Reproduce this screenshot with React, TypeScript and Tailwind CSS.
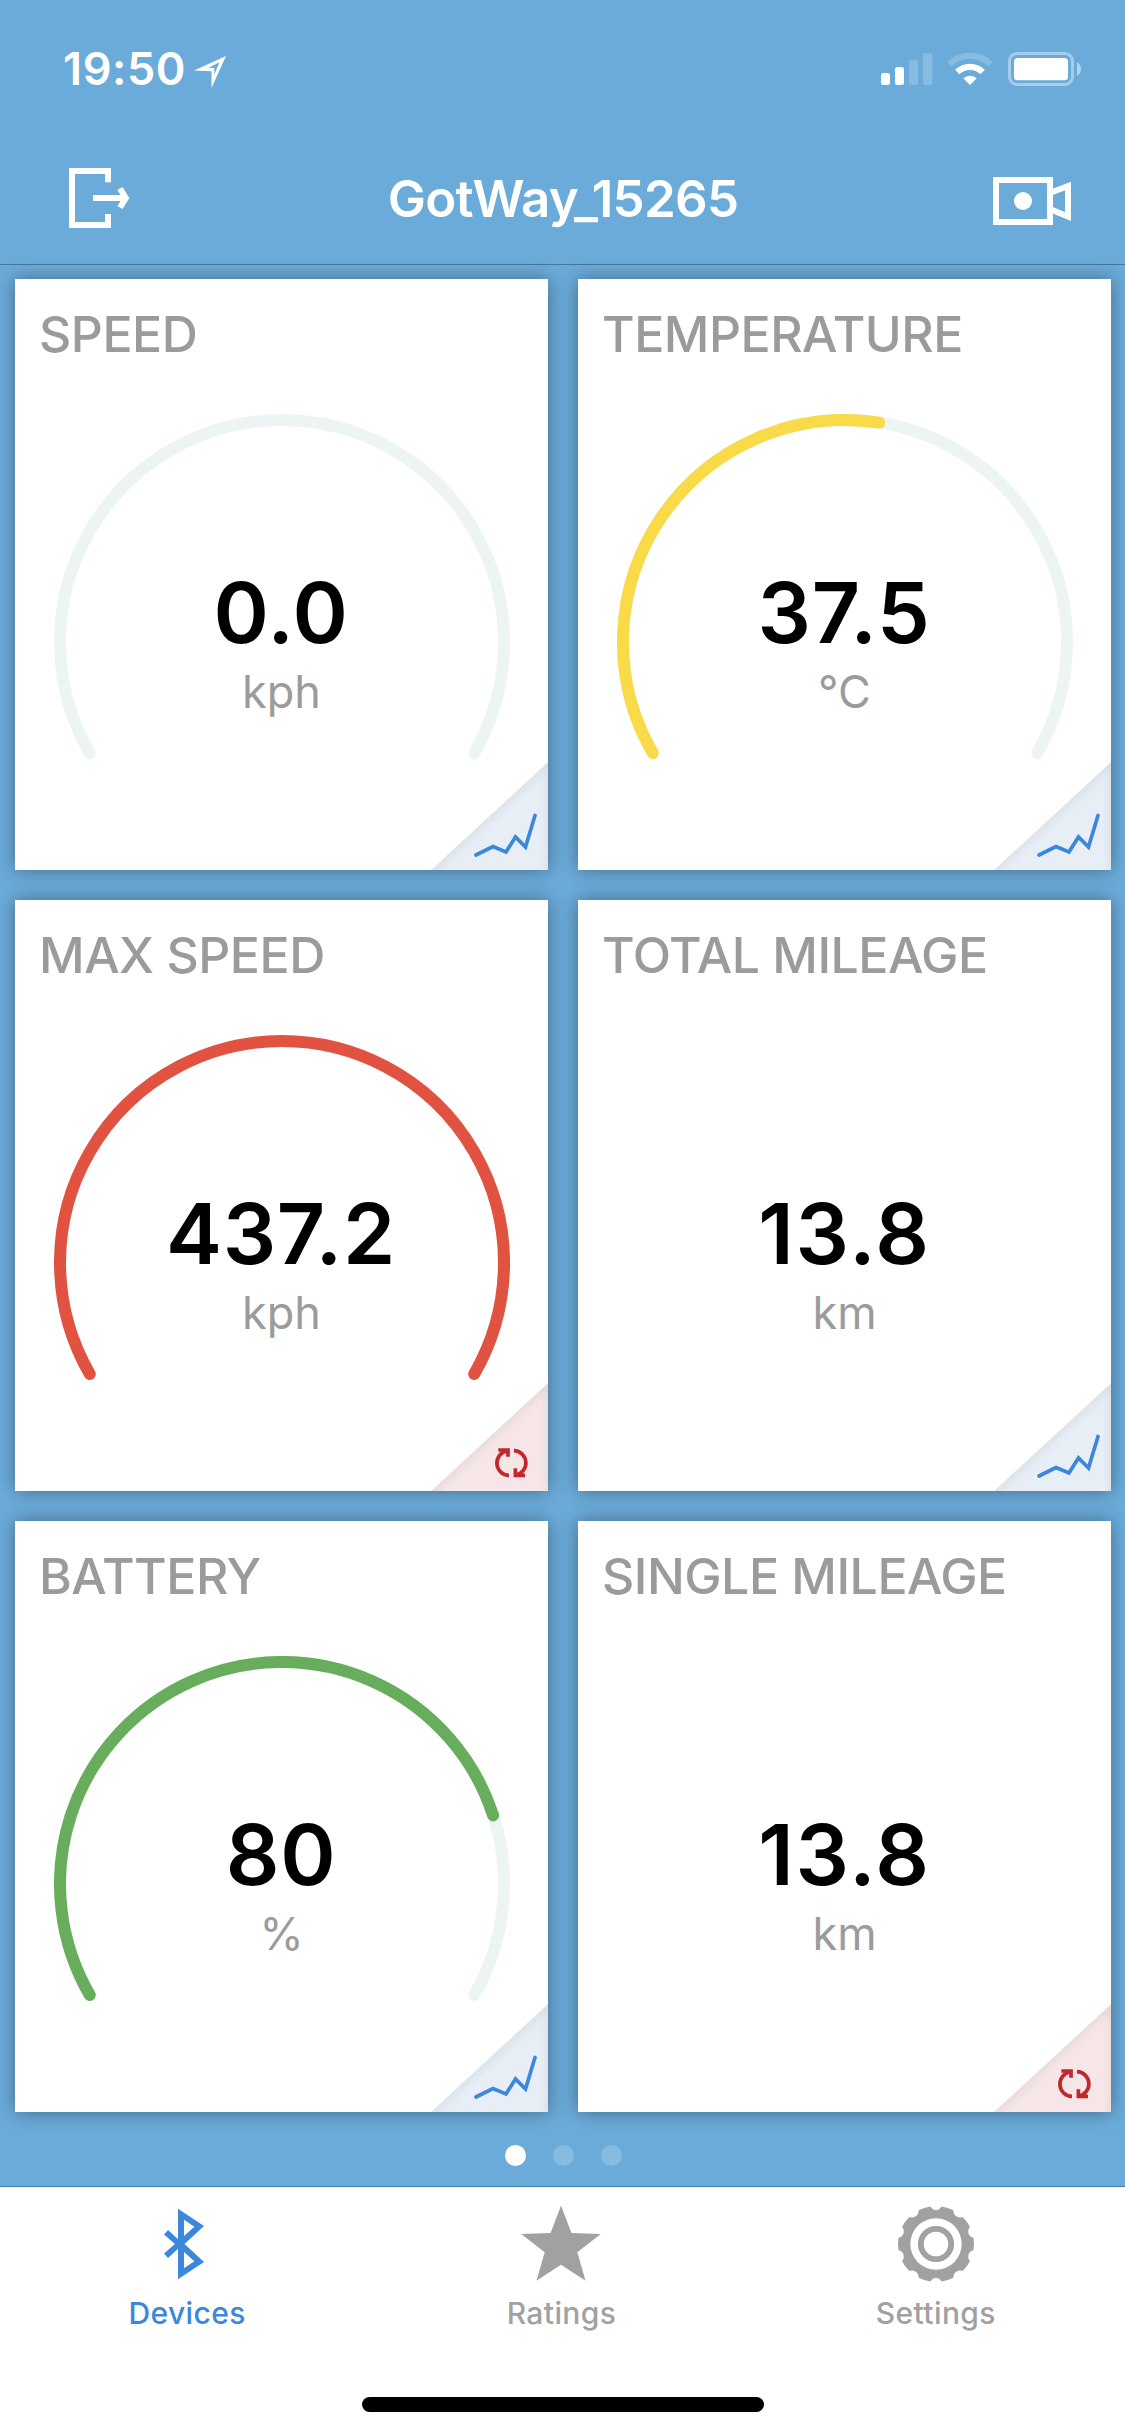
import { useId } from 'react';
import type { ReactNode } from 'react';
import clsx from 'clsx';

interface Metric {
  title: string;
  value: string;
  unit: string;
  progress?: number;
  color?: string;
  action: 'chart' | 'reset';
}

const metrics: Metric[] = [
  { title: 'SPEED', value: '0.0', unit: 'kph', progress: 0, action: 'chart' },
  { title: 'TEMPERATURE', value: '37.5', unit: '°C', progress: 0.537, color: '#f9da49', action: 'chart' },
  { title: 'MAX SPEED', value: '437.2', unit: 'kph', progress: 1, color: '#e15241', action: 'reset' },
  { title: 'TOTAL MILEAGE', value: '13.8', unit: 'km', action: 'chart' },
  { title: 'BATTERY', value: '80', unit: '%', progress: 0.8, color: '#68ad5c', action: 'chart' },
  { title: 'SINGLE MILEAGE', value: '13.8', unit: 'km', action: 'reset' },
];

// The gauge sweeps 240 degrees, starting at the lower left
const SWEEP = 240;
const RADIUS = 222;

function arcPath(progress: number) {
  const point = (deg: number) => {
    const rad = ((deg - 210) * Math.PI) / 180;
    return `${228 + RADIUS * Math.cos(rad)} ${228 + RADIUS * Math.sin(rad)}`;
  };
  const end = SWEEP * progress;
  return `M ${point(0)} A ${RADIUS} ${RADIUS} 0 ${end > 180 ? 1 : 0} 1 ${point(end)}`;
}

function gearPath() {
  const at = (r: number, deg: number) => {
    const rad = (deg * Math.PI) / 180;
    return `${(39 + r * Math.sin(rad)).toFixed(2)} ${(39 - r * Math.cos(rad)).toFixed(2)}`;
  };
  let d = `M${at(38, 9)}`;
  for (let i = 0; i < 10; i++) {
    const a = i * 36;
    d += `A38 38 0 0 1 ${at(38, a + 27)}`;
    d += `L${at(35, a + 31)}Q${at(33.2, a + 36)} ${at(35, a + 41)}L${at(38, a + 45)}`;
  }
  return `${d}Z`;
}

function Gauge({ progress, color }: { progress: number; color?: string }) {
  return (
    <svg viewBox="0 0 456 350" className="absolute left-[38.5px] top-[135px] h-[350px] w-[456px]" fill="none" strokeWidth="12" strokeLinecap="round">
      <path d={arcPath(1)} stroke="#ecf5f4" />
      {progress > 0 && <path d={arcPath(progress)} stroke={color} />}
    </svg>
  );
}

function Corner({ action }: { action: Metric['action'] }) {
  const id = useId();
  const isChart = action === 'chart';

  return (
    <svg viewBox="0 0 117 108" className="absolute bottom-0 right-0 h-[108px] w-[117px]" fill="none">
      <defs>
        <clipPath id={`${id}-clip`}>
          <path d="M117 0V108H0Z" />
        </clipPath>
        <filter id={`${id}-blur`} x="-20%" y="-20%" width="140%" height="140%">
          <feGaussianBlur stdDeviation="4" />
        </filter>
      </defs>
      <g clipPath={`url(#${id}-clip)`}>
        <path d="M117 0V108H0Z" fill={isChart ? '#e7eef5' : '#f6e6e8'} />
        <path d="M-10 117L119 -2V120" stroke="#000" strokeOpacity="0.1" strokeWidth="5" filter={`url(#${id}-blur)`} />
      </g>
      {isChart ? (
        <path d="M45 93L62 84.5L75 90L84.5 75L94.5 85L104 53.5" stroke="#3a87dc" strokeWidth="3.7" strokeLinecap="round" />
      ) : (
        <g stroke="#c1272d" strokeWidth="3.7">
          <path d="M78 92.4A12.3 12.3 0 0 1 76 68" />
          <path d="M67.3 67H77V73.7" />
          <path d="M83 67.7A12.25 12.25 0 0 1 84.8 92" />
          <path d="M94 92.3H84.4V85.3" />
        </g>
      )}
    </svg>
  );
}

function MetricCard({ metric }: { metric: Metric }) {
  return (
    <div className="relative flex h-[591px] flex-col bg-white shadow-[0_0_18px_rgba(0,0,0,0.38)]">
      <h2 className="ml-[24px] mt-[24px] text-[50px] font-medium leading-[62px] tracking-[-0.5px] text-[#9b9b9b]">
        {metric.title}
      </h2>
      {metric.progress !== undefined && <Gauge progress={metric.progress} color={metric.color} />}
      <div
        className={clsx(
          'relative mt-[196px] text-center text-[84px] font-semibold leading-[104px] text-black',
          metric.value.startsWith('1') ? 'tracking-[1.8px]' : 'mr-[1px] tracking-[0.7px]',
        )}
      >
        {metric.value}
      </div>
      <div className="relative text-center text-[45px] leading-[54px] text-[#9b9b9b]">{metric.unit}</div>
      <Corner action={metric.action} />
    </div>
  );
}

function StatusBar() {
  return (
    <div className="flex h-[132px] items-start justify-between pl-[63px] pr-[44px] pt-[42px] text-white">
      <div className="flex items-start">
        <span className="w-[131px] whitespace-nowrap text-[45px] font-semibold leading-[54px] tracking-[0.6px]">19:50</span>
        <svg viewBox="0 0 32 32" className="mt-[14px] h-[32px] w-[32px]" fill="#fff" fillRule="evenodd">
          <path d="M0 14.5L32 0L17.5 32V15.3ZM14.5 11.8L25.5 6.3L20.3 18.5V12Z" />
        </svg>
      </div>
      <svg viewBox="0 0 200 34" className="mt-[10px] h-[34px] w-[200px]" fill="#fff">
        <rect x="0" y="21" width="9" height="12" rx="2.5" />
        <rect x="14" y="15" width="9" height="18" rx="2.5" />
        <rect x="28" y="8" width="9" height="25" rx="2.5" opacity="0.2" />
        <rect x="42" y="1" width="9.3" height="32" rx="2.5" opacity="0.2" />
        <path d="M68.5 12.2A29.3 29.3 0 0 1 109.5 12.2" fill="none" stroke="#fff" strokeWidth="6" opacity="0.2" />
        <path d="M76.3 20A18.2 18.2 0 0 1 101.7 20" fill="none" stroke="#fff" strokeWidth="6.2" />
        <path d="M82.3 26.3A9.8 9.8 0 0 1 95.7 26.3L89 33Z" />
        <rect x="128.5" y="1.5" width="63" height="31" rx="7.5" fill="none" stroke="#fff" strokeWidth="3" opacity="0.4" />
        <rect x="133" y="6" width="54" height="22.3" rx="3.5" />
        <path d="M196 10.5C198.6 11.6 200 14.2 200 17S198.6 22.4 196 23.5Z" opacity="0.5" />
      </svg>
    </div>
  );
}

function NavBar() {
  return (
    <header className="flex h-[133px] items-start justify-between border-b border-[#4a7899] pl-[69px] pr-[54px] text-white">
      <svg viewBox="0 0 62 62" className="mt-[35px] h-[62px] w-[62px]" fill="none" stroke="#fff" strokeWidth="6">
        <path d="M39 15.3V4H3V58H39V47" />
        <path d="M24 31H56" />
        <path d="M51 21.5L56.8 31L51 40.5" />
      </svg>
      <h1 className="ml-[2px] mt-[36px] text-[51px] font-semibold leading-[62px] tracking-[-0.7px]">GotWay_15265</h1>
      <svg viewBox="0 0 78 48" className="mt-[45px] h-[48px] w-[78px]" fill="none" stroke="#fff" strokeWidth="6">
        <rect x="3" y="3" width="54" height="42" />
        <circle cx="30" cy="24" r="9" fill="#fff" stroke="none" />
        <path d="M58 15.5L75 9V39.5L58 32.5" />
      </svg>
    </header>
  );
}

function Pager() {
  return (
    <div className="flex h-[74px] justify-center gap-[27px] pl-[2px] pt-[33px]">
      <span className="h-[21px] w-[21px] rounded-full bg-white" />
      <span className="h-[21px] w-[21px] rounded-full bg-white/20" />
      <span className="h-[21px] w-[21px] rounded-full bg-white/20" />
    </div>
  );
}

function Tab({ label, active, children }: { label: string; active?: boolean; children: ReactNode }) {
  return (
    <button className={clsx('flex flex-col items-center', active ? 'text-[#3a87dc]' : 'text-[#a1a1a1]')}>
      <span className="flex h-[80px] items-center justify-center">{children}</span>
      <span className="mt-[11px] text-[30px] font-medium leading-[36px] tracking-[0.4px]">{label}</span>
    </button>
  );
}

function TabBar() {
  return (
    <nav className="flex flex-1 flex-col items-center border-t border-[#3f7ca0] bg-white">
      <div className="grid w-full grid-cols-3 pr-[2px] pt-[17px]">
        <Tab label="Devices" active>
          <svg viewBox="0 0 40 72" className="mr-[6px] h-[72px] w-[40px]" fill="currentColor" fillRule="evenodd">
            <path d="M14 0.7L40 18L20.5 36L40 54L14 71.3V40.8L4 50L0 45.6L11 36L0 26.4L4 22L14 31.2ZM20 11.7L30.4 18.7L20 28Z M20 44L30.4 53.3L20 60.3Z" />
          </svg>
        </Tab>
        <Tab label="Ratings">
          <svg viewBox="0 0 80 78" className="h-[78px] w-[80px]" fill="currentColor">
            <path d="M40 0.5L50.4 28L79.8 29L56.3 47.3L64.5 75.7L40 59.7L15.5 75.7L23.7 47.3L0.2 29L29.6 28Z" />
          </svg>
        </Tab>
        <Tab label="Settings">
          <svg viewBox="0 0 78 78" className="h-[78px] w-[78px]" fill="currentColor">
            <path fillRule="evenodd" d={`${gearPath()}M39 13.3A25.7 25.7 0 1 0 39 64.7A25.7 25.7 0 1 0 39 13.3Z`} />
            <circle cx="39" cy="39" r="15.2" fill="none" stroke="currentColor" strokeWidth="5.8" />
          </svg>
        </Tab>
      </div>
      <div className="mt-[66px] h-[15px] w-[402px] rounded-full bg-black" />
    </nav>
  );
}

export default function App() {
  return (
    <div className="flex h-[2436px] w-[1125px] flex-col overflow-hidden bg-[#6babda] font-['Inter',sans-serif]">
      <StatusBar />
      <NavBar />
      <main className="grid grid-cols-2 gap-[30px] pl-[15px] pr-[14px] pt-[14px]">
        {metrics.map((metric) => (
          <MetricCard key={metric.title} metric={metric} />
        ))}
      </main>
      <Pager />
      <TabBar />
    </div>
  );
}
